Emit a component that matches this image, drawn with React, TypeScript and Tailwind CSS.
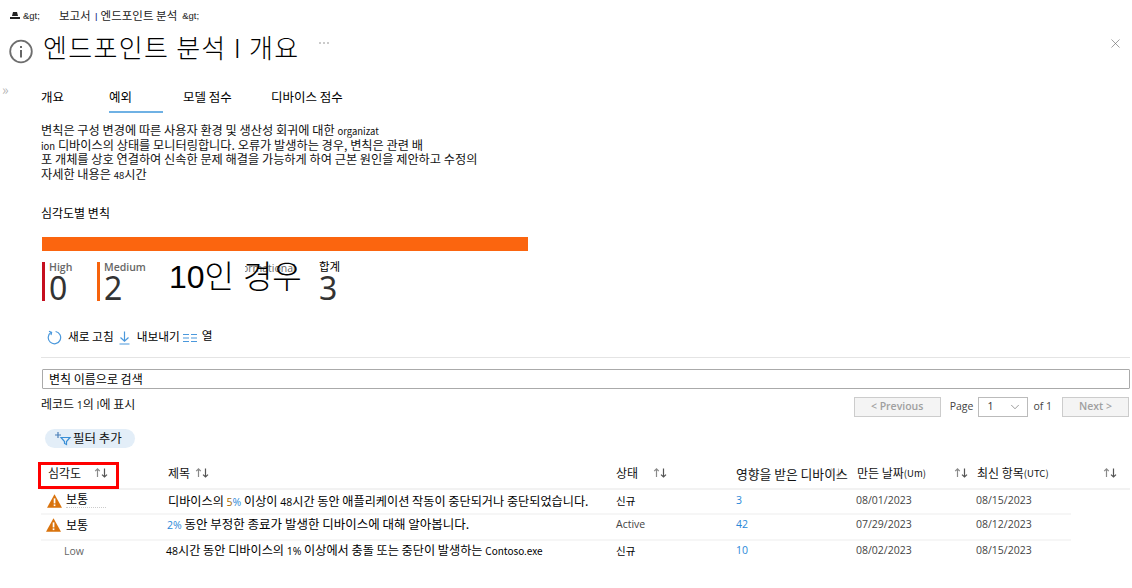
import React from "react";
import { X, ChevronDown } from "lucide-react";

function Sort({ className = "" }: { className?: string }) {
  return (
    <svg width="15" height="12" viewBox="0 0 15 12" className={`shrink-0 ${className}`} fill="none" strokeWidth="1.2">
      <path d="M3.5 10V2M1.2 4.2l2.3-2.4 2.3 2.4" stroke="#8a8a8a" />
      <path d="M10.5 1.5v8.5M8 7.6l2.5 2.4L13 7.6" stroke="#555" />
    </svg>
  );
}

function Warn({ className = "" }: { className?: string }) {
  return (
    <svg width="15" height="14" viewBox="0 0 15 14" className={`shrink-0 ${className}`}>
      <path d="M7.5 0.3 L15 13.7 H0 Z" fill="#d9730d" />
      <rect x="6.7" y="4.4" width="1.7" height="5" fill="#fff" />
      <rect x="6.7" y="10.4" width="1.7" height="1.7" fill="#fff" />
    </svg>
  );
}

const L = ({ children, c = "" }: { children: React.ReactNode; c?: string }) => (
  <span className={`text-[10.5px] font-['Open_Sans',sans-serif] ${c}`}>{children}</span>
);

function Stat({ label, value, bar, className = "" }: { label: string; value: string; bar: string; className?: string }) {
  return (
    <div className={`flex h-[40px] ${className}`}>
      <div className={`w-[3px] h-[39px] mt-[2px] ${bar}`} />
      <div className="ml-[4px]">
        <div className="text-[10.5px] leading-[14px] text-[#666] font-semibold">{label}</div>
        <div className="text-[32px] leading-[30px] text-[#333] -mt-[1px] font-['Noto_Sans',sans-serif]">{value}</div>
      </div>
    </div>
  );
}

const rowCols = "grid grid-cols-[127px_448px_120px_120px_120px_1fr] items-center";
const kr = "font-['Noto_Sans_CJK_KR',sans-serif]";

export default function App() {
  return (
    <div className="w-[1132px] h-[588px] overflow-hidden bg-white text-black text-[12px] font-['Noto_Sans_CJK_KR',sans-serif]">
      {/* breadcrumb */}
      <div className="flex items-center h-[16px] mt-[8px] pl-[10px] text-[11.5px] text-[#222] whitespace-nowrap">
        <svg width="10" height="8" viewBox="0 0 10 8" className="mr-[3px]"><path d="M3 0h4l1 4H2zM0 5h10v2H0z" fill="#222" /></svg>
        <span className="font-['Liberation_Sans',sans-serif] text-[9.5px]">&amp;gt;</span>
        <span className="ml-[19px]">보고서</span>
        <span className="ml-[4px] text-[#2b3a8c] text-[10px]">I</span>
        <span className="ml-[3px]">엔드포인트 분석</span>
        <span className="ml-[5px] font-['Liberation_Sans',sans-serif] text-[9.5px]">&amp;gt;</span>
      </div>

      {/* title */}
      <div className="flex items-center h-[34px] mt-[6px] pl-[9px] pr-[9px]">
        <svg width="24" height="25" viewBox="0 0 24 25" className="mt-[8px] shrink-0" fill="none">
          <circle cx="12" cy="12.5" r="10.8" stroke="#6e6e6e" strokeWidth="1.8" />
          <rect x="11" y="11" width="2" height="7.5" fill="#666" />
          <rect x="11" y="7" width="2" height="2" fill="#666" />
        </svg>
        <h1 className="ml-[10px] text-[26px] leading-[34px] font-light tracking-[1.3px] whitespace-nowrap">엔드포인트 분석 I 개요</h1>
        <svg width="12" height="4" viewBox="0 0 12 4" className="ml-[18px] -mt-[8px]" fill="#888">
          <circle cx="2" cy="2" r="0.8" /><circle cx="6" cy="2" r="0.8" /><circle cx="10" cy="2" r="0.8" />
        </svg>
        <X size={15} strokeWidth={1} className="ml-auto text-[#666] -mt-[7px]" />
      </div>

      {/* tabs */}
      <div className="flex h-[26px] mt-[23px] text-[12.5px] whitespace-nowrap">
        <div className="w-[41px] pl-[2px] -mt-[5px] text-[14px] leading-[14px] text-[#b5b5b5]">»</div>
        <div className="w-[68px] pt-[1px]">개요</div>
        <div className="w-[54px] pt-[1px] h-[26px] border-b-2 border-[#6fb1e4]">예외</div>
        <div className="w-[108px] pl-[20px] pt-[1px]">모델 점수</div>
        <div className="pt-[1px]">디바이스 점수</div>
      </div>

      <main className="pl-[41px]">
        {/* description */}
        <div className="mt-[10px] text-[12.2px] leading-[14.7px] text-[#111] whitespace-nowrap">
          <p className="h-[14.7px]">변칙은 구성 변경에 따른 사용자 환경 및 생산성 회귀에 대한 <span className="text-[9.5px]">organizat</span></p>
          <p className="h-[14.7px]"><span className="text-[9.5px]">ion</span> 디바이스의 상태를 모니터링합니다. 오류가 발생하는 경우, 변칙은 관련 배</p>
          <p className="h-[14.7px]">포 개체를 상호 연결하여 신속한 문제 해결을 가능하게 하여 근본 원인을 제안하고 수정의</p>
          <p className="h-[14.7px]">자세한 내용은 <span className="text-[9.5px]">48</span>시간</p>
        </div>

        <div className="mt-[23px] leading-[16px]">심각도별 변칙</div>
        <div className="mt-[16px] h-[14px] w-[486px] ml-[1px] bg-[#fb650f]" />

        {/* stats */}
        <div className="flex mt-[9px] h-[47px] ml-[1px] font-['Open_Sans',sans-serif]">
          <Stat label="High" value="0" bar="bg-[#c50f1f]" className="w-[55px]" />
          <Stat label="Medium" value="2" bar="bg-[#f7630c]" className="w-[72px]" />
          <div className="relative w-[150px]">
            <div className="absolute left-[76px] top-[1px] w-[51px] overflow-hidden">
              <span className="block -ml-[16px] text-[10.5px] text-[#666] whitespace-nowrap">Informational</span>
            </div>
            <span className="relative block text-[32px] leading-[36px] -mt-[1px] whitespace-nowrap font-light font-['Liberation_Sans','Noto_Sans_CJK_KR',sans-serif]">10인 경우</span>
          </div>
          <div>
            <div className={`text-[11.5px] leading-[13px] ${kr}`}>합계</div>
            <div className="text-[32px] leading-[30px] text-[#333] font-['Noto_Sans',sans-serif]">3</div>
          </div>
        </div>

        {/* toolbar */}
        <div className="flex items-center h-[16px] mt-[22px] pl-[6px] text-[11.7px] whitespace-nowrap">
          <svg width="15" height="15" viewBox="0 0 15 15" fill="none" stroke="#4a98dc" strokeWidth="1.2" className="mt-[2px] shrink-0">
            <path d="M4.2 2.3A6.2 6.2 0 1 0 8.6 1.5" />
            <path d="M2 1.2l2.6 1.2L4 5" />
          </svg>
          <span className="ml-[6px] -mt-[2px]">새로 고침</span>
          <svg width="11" height="14" viewBox="0 0 11 14" fill="none" stroke="#4a98dc" strokeWidth="1.2" className="ml-[5px] mt-[3px] shrink-0">
            <path d="M5.5 0.5v9.5M1.5 6.5l4 3.7 4-3.7M0.5 13h10" />
          </svg>
          <span className="ml-[7px] -mt-[2px]">내보내기</span>
          <svg width="14" height="10" viewBox="0 0 14 10" className="ml-[3px] mt-[3px] shrink-0" stroke="#4a98dc" strokeWidth="1.2">
            <path d="M0 1.5h6M8 1.5h6M0 5h6M8 5h6M0 8.5h6M8 8.5h6" />
          </svg>
          <span className="ml-[5px] -mt-[4px]">열</span>
        </div>
        <div className="mt-[12px] h-px bg-[#e4e4e4] mr-[2px]" />

        {/* search */}
        <div className="mt-[11px] mr-[2px] ml-[1px] h-[20px] border border-[#aaa] rounded-[1px] flex items-center px-[6px]">변칙 이름으로 검색</div>

        {/* pagination */}
        <div className="flex items-center h-[20px] mt-[8px] mr-[3px]">
          <span className="text-[#111] -mt-[4px]">레코드 <L>1</L>의 <L>I</L>에 표시</span>
          <div className="ml-auto flex items-center text-[10.5px] font-['Open_Sans',sans-serif]">
            <div className="w-[87px] h-[20px] border border-[#ccc] bg-[#f4f4f4] flex items-center justify-center font-semibold text-[#a0a0a0]">&lt; Previous</div>
            <span className="ml-[9px] text-[#444]">Page</span>
            <div className="ml-[5px] w-[50px] h-[20px] border border-[#bbb] flex items-center pl-[8px] text-[#333]">
              1<ChevronDown size={14} strokeWidth={1} className="ml-auto mr-[5px] text-[#555]" />
            </div>
            <span className="ml-[5px] text-[#444]">of 1</span>
            <div className="ml-[10px] w-[67px] h-[20px] border border-[#ccc] bg-[#f4f4f4] flex items-center justify-center font-semibold text-[#a0a0a0]">Next &gt;</div>
          </div>
        </div>

        {/* filter */}
        <div className="mt-[12px] ml-[4px] w-[90px] h-[19px] rounded-full bg-[#e3eef8] flex items-center pl-[9px] text-[12.5px] text-[#111]">
          <svg width="18" height="15" viewBox="0 0 18 15" fill="none" className="shrink-0">
            <path d="M4 1v6M1 4h6" stroke="#4a7fb8" strokeWidth="1.2" />
            <path d="M7 6.5h9l-3.5 4v3l-2-1v-2z" stroke="#3a8fd6" strokeWidth="1.2" />
          </svg>
          <span className="ml-[1px] whitespace-nowrap">필터 추가</span>
        </div>
      </main>

      {/* table */}
      <div className="relative mt-[15px] ml-[41px]">
        <div className={`${rowCols} h-[27px] pb-[4px] border-b-2 border-[#f2f2f2] mr-[2px] text-[#111]`}>
          <div className="flex items-center pl-[7px]">심각도<Sort className="ml-[13px]" /></div>
          <div className="flex items-center">제목<Sort className="ml-[5px]" /></div>
          <div className="flex items-center">상태<Sort className="ml-[15px]" /></div>
          <div className="flex items-center whitespace-nowrap text-[12.8px]">영향을 받은 디바이스<Sort className="-ml-[20px] opacity-40" /></div>
          <div className="flex items-center whitespace-nowrap pl-[1px]">만든 날짜<span className="text-[9.5px]">(Um)</span><Sort className="ml-[28px]" /></div>
          <div className="flex items-center whitespace-nowrap pl-[1px]">최신 항목<span className="text-[9.5px]">(UTC)</span><Sort className="ml-auto mr-[12px]" /></div>
        </div>
        <div className={`${rowCols} h-[25px] border-b-2 border-[#f6f6f6] w-[1030px]`}>
          <div className="flex items-center pl-[6px]"><Warn /><span className="ml-[4px] -mt-[3px] w-[40px] leading-[16px] border-b border-dotted border-[#ccc]">보통</span></div>
          <div className="whitespace-nowrap text-[12.15px]">디바이스의 <L c="text-[#2b88d8]"><span className="text-[#a86a00]">5</span>%</L> 이상이 <L>48</L>시간 동안 애플리케이션 작동이 중단되거나 중단되었습니다.</div>
          <div className="text-[10.5px]">신규</div>
          <L c="text-[#2b88d8]">3</L>
          <L c="text-[#444]">08/01/2023</L>
          <L c="text-[#444]">08/15/2023</L>
        </div>
        <div className={`${rowCols} h-[26px] pb-[4px] border-b-2 border-[#f6f6f6] w-[1030px]`}>
          <div className="flex items-center pl-[5px]"><Warn className="mt-[1px]" /><span className="ml-[5px]">보통</span></div>
          <div className="whitespace-nowrap -ml-[1px] text-[12.5px]"><L c="text-[#2b88d8]">2%</L> 동안 부정한 종료가 발생한 디바이스에 대해 알아봅니다.</div>
          <L c="text-[#444]">Active</L>
          <L c="text-[#2b88d8]">42</L>
          <L c="text-[#444]">07/29/2023</L>
          <L c="text-[#444]">08/12/2023</L>
        </div>
        <div className={`${rowCols} h-[24px] pb-[4px] w-[1030px]`}>
          <div className="pl-[23px]"><L c="text-[#666] font-medium">Low</L></div>
          <div className="whitespace-nowrap -ml-[2px] text-[12.15px]"><L>48</L>시간 동안 디바이스의 <L>1%</L> 이상에서 충돌 또는 중단이 발생하는 <span className="text-[10px]">Contoso.exe</span></div>
          <div className="text-[10.5px]">신규</div>
          <L c="text-[#2b88d8]">10</L>
          <L c="text-[#444]">08/02/2023</L>
          <L c="text-[#444]">08/15/2023</L>
        </div>
        {/* highlight */}
        <div className="absolute left-[-3px] top-[-1px] w-[81px] h-[27px] border-[3px] border-[#f00] pointer-events-none" />
      </div>
    </div>
  );
}
